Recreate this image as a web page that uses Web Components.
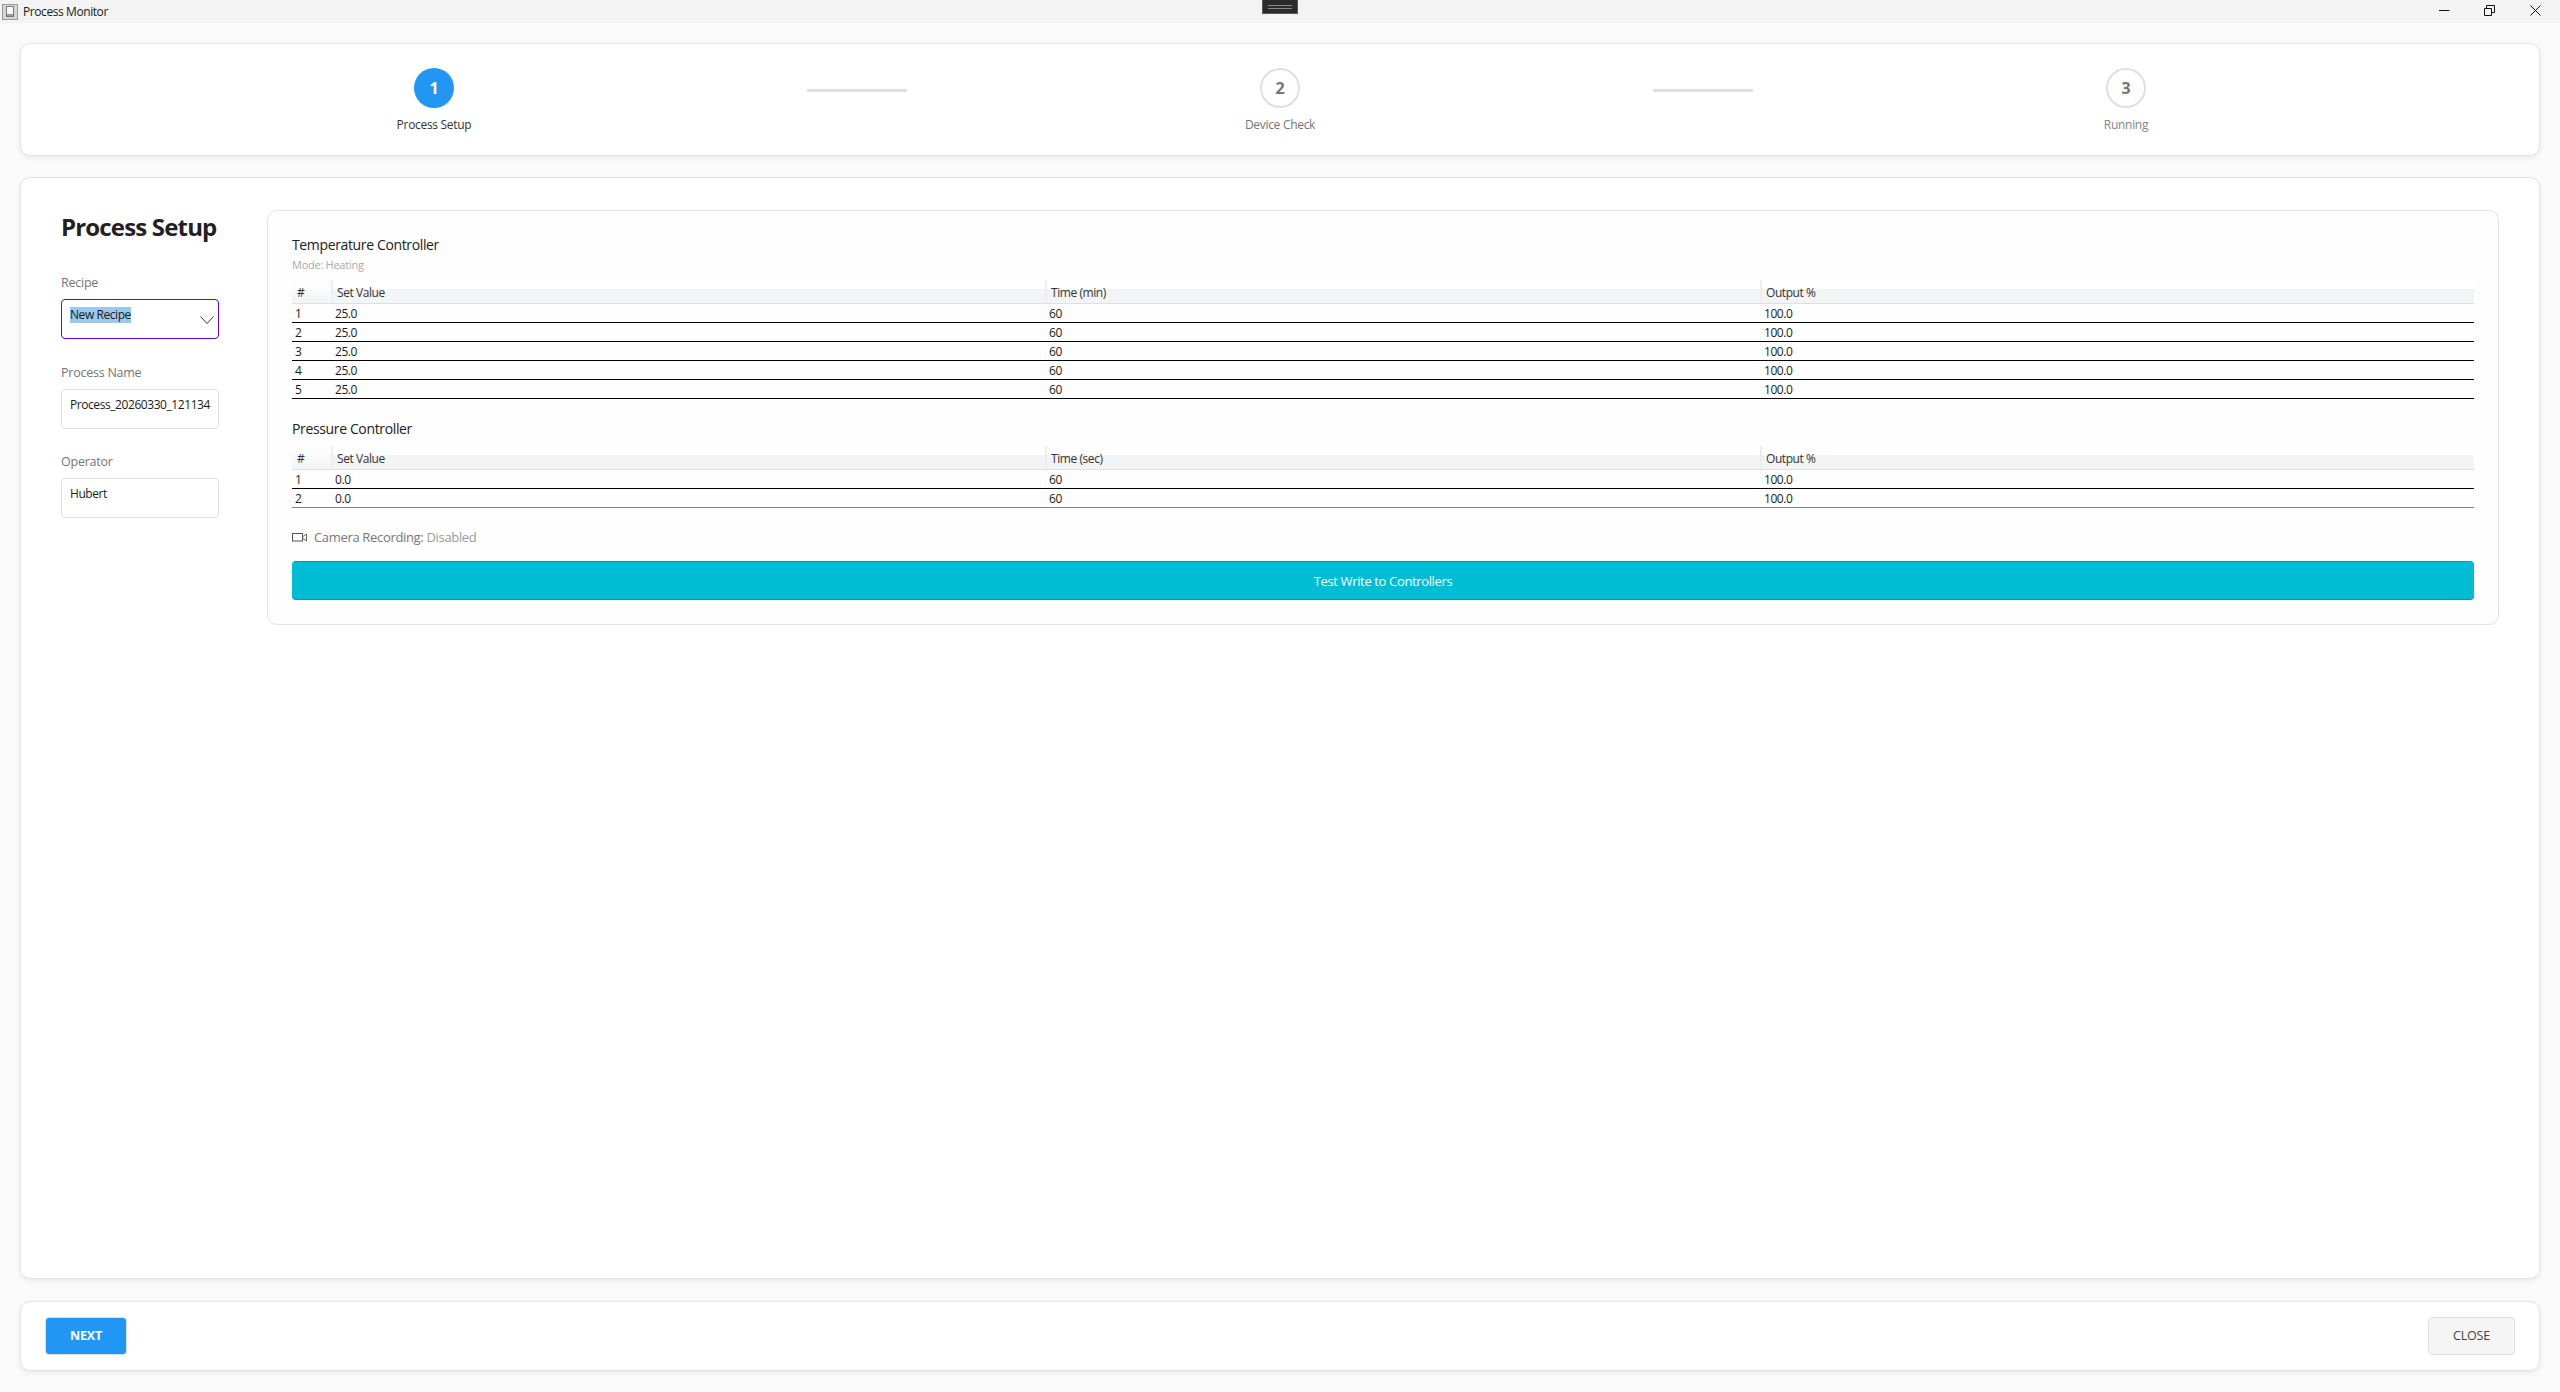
<!DOCTYPE html>
<html>
<head>
<meta charset="utf-8">
<title>Process Monitor</title>
<style>
  html, body { margin: 0; height: 100%; overflow: hidden; }
  body { background: #fafafa; font-family: "Open Sans", "Noto Sans", sans-serif; color: #212121; }
</style>
</head>
<body>
<process-app>
  <window-bar title-text="Process Monitor" slot="bar"></window-bar>
  <card-box slot="steps">
    <step-bar>
      <wizard-step num="1" label="Process Setup" active></wizard-step>
      <step-line></step-line>
      <wizard-step num="2" label="Device Check"></wizard-step>
      <step-line></step-line>
      <wizard-step num="3" label="Running" dim></wizard-step>
    </step-bar>
  </card-box>
  <card-box slot="main" class="grow">
    <setup-page>
      <form-field label="Recipe" value="New Recipe" focused></form-field>
      <form-field label="Process Name" value="Process_20260330_121134"></form-field>
      <form-field label="Operator" value="Hubert"></form-field>
      <controller-panel slot="panel">
        <section-title>Temperature Controller</section-title>
        <mode-note>Mode: Heating</mode-note>
        <data-table time="Time (min)" rows="1,25.0,60,100.0;2,25.0,60,100.0;3,25.0,60,100.0;4,25.0,60,100.0;5,25.0,60,100.0"></data-table>
        <section-title class="next">Pressure Controller</section-title>
        <data-table class="tight" last-gray time="Time (sec)" rows="1,0.0,60,100.0;2,0.0,60,100.0"></data-table>
        <camera-note></camera-note>
        <action-btn kind="teal">Test Write to Controllers</action-btn>
      </controller-panel>
    </setup-page>
  </card-box>
  <card-box slot="foot">
    <foot-bar>
      <action-btn kind="primary">NEXT</action-btn>
      <action-btn kind="plain" slot="end">CLOSE</action-btn>
    </foot-bar>
  </card-box>
</process-app>

<script>
const FONT = `"Open Sans", "Noto Sans", sans-serif`;

// small helper, every element here is just a style + markup in an open shadow root
function shadow(el, html) {
  el.attachShadow({ mode: "open" }).innerHTML = html;
}

class ProcessApp extends HTMLElement {
  constructor() {
    super();
    shadow(this, `<style>
      :host { display: flex; flex-direction: column; height: 1392px; box-sizing: border-box; }
      .body { flex: 1; display: flex; flex-direction: column; padding: 20px 20px 21px; min-height: 0; }
      .s1 { display: block; height: 113px; margin-bottom: 21px; }
      .s2 { display: flex; flex: 1; min-height: 0; margin-bottom: 22px; }
      .s3 { display: block; height: 70px; }
      ::slotted([slot=steps]) { height: 113px; }
      ::slotted([slot=main]) { flex: 1; }
      ::slotted([slot=foot]) { height: 70px; }
    </style>
    <slot name="bar"></slot>
    <div class="body">
      <div class="s1"><slot name="steps"></slot></div>
      <div class="s2"><slot name="main"></slot></div>
      <div class="s3"><slot name="foot"></slot></div>
    </div>`);
  }
}

class WindowBar extends HTMLElement {
  connectedCallback() {
    if (this.shadowRoot) return;
    shadow(this, `<style>
      :host { display: flex; align-items: center; height: 23px; background: #f3f3f3; position: relative; flex: none; font: 12px/23px ${FONT}; color: #1a1a1a; }
      .icon { margin: 0 5px 0 2px; flex: none; }
      .ttl { letter-spacing: -0.42px; }
      .notch { position: absolute; left: 1262px; top: 0; width: 34px; height: 12px; background: #2b2b2b; border: 1px solid #585858; border-top: 0; display: flex; flex-direction: column; align-items: center; justify-content: center; gap: 2px; padding-top: 1px; box-sizing: content-box; }
      .notch i { display: block; width: 24px; height: 1px; background: #8a8a8a; }
      .ctrl { margin-left: auto; display: flex; height: 23px; }
      .ctrl svg { display: block; position: absolute; top: 5px; }
    </style>
    <svg class="icon" width="16" height="16" viewBox="0 0 16 16">
      <rect x=".5" y=".5" width="15" height="15" fill="#d6d6d6" stroke="#9a9a9a"/>
      <rect x="4.5" y="2.5" width="7" height="10" fill="#fafafa" stroke="#777"/>
      <rect x="5" y="10" width="6" height="2" fill="#9a9a9a"/>
    </svg>
    <span class="ttl">${this.getAttribute("title-text")}</span>
    <div class="notch"><i></i><i></i></div>
    <div class="ctrl">
      <svg style="left:2439px" width="11" height="11" viewBox="0 0 11 11"><path d="M0 5.5H10.5" stroke="#111" fill="none"/></svg>
      <svg style="left:2484px" width="11" height="11" viewBox="0 0 11 11"><path d="M.5 3.5h7v7h-7zM2.5 3.5V.5h8v7H7.5" stroke="#111" fill="none"/></svg>
      <svg style="left:2530px" width="11" height="11" viewBox="0 0 11 11"><path d="M.5 .5L10.5 10.5M10.5 .5L.5 10.5" stroke="#111" fill="none"/></svg>
    </div>`);
  }
}

class CardBox extends HTMLElement {
  constructor() {
    super();
    shadow(this, `<style>
      :host { display: block; box-sizing: border-box; background: #fff; border: 1px solid #e4e4e4; border-radius: 10px; box-shadow: 0 2px 5px rgba(0,0,0,.07); }
    </style><slot></slot>`);
  }
}

class StepBar extends HTMLElement {
  constructor() {
    super();
    shadow(this, `<style>
      :host { display: flex; align-items: flex-start; padding: 0 40px; height: 100%; }
    </style><slot></slot>`);
  }
}

class WizardStep extends HTMLElement {
  connectedCallback() {
    if (this.shadowRoot) return;
    const active = this.hasAttribute("active");
    const dim = this.hasAttribute("dim");
    shadow(this, `<style>
      :host { display: flex; flex: 1; flex-direction: column; align-items: center; padding-top: 24px; }
      .dot { width: 40px; height: 40px; box-sizing: border-box; border-radius: 50%; display: flex; align-items: center; justify-content: center; font: 700 16px/1 ${FONT};
        background: ${active ? "#2196f3" : "#fff"}; color: ${active ? "#fff" : "#757575"}; border: ${active ? "0" : "2.5px solid #e0e0e0"}; }
      .lbl { margin-top: 8px; font: 500 12px/18px ${FONT}; letter-spacing: -0.3px; color: ${active ? "#333" : dim ? "#858585" : "#757575"}; }
    </style>
    <div class="dot">${this.getAttribute("num")}</div>
    <div class="lbl">${this.getAttribute("label")}</div>`);
  }
}

class StepLine extends HTMLElement {
  constructor() {
    super();
    shadow(this, `<style>
      :host { display: block; flex: none; width: 100px; height: 3px; margin-top: 45px; background: #e0e0e0; }
    </style>`);
  }
}

class SetupPage extends HTMLElement {
  constructor() {
    super();
    shadow(this, `<style>
      :host { display: flex; align-items: flex-start; padding: 32px 40px 0; gap: 48px; }
      .left { width: 158px; flex: none; }
      h1 { margin: -1px 0 29px; font: 700 24px/36px ${FONT}; letter-spacing: -0.83px; color: #212121; white-space: nowrap; }
      .right { flex: 1; min-width: 0; }
    </style>
    <div class="left"><h1>Process Setup</h1><slot></slot></div>
    <div class="right"><slot name="panel"></slot></div>`);
  }
}

class FormField extends HTMLElement {
  connectedCallback() {
    if (this.shadowRoot) return;
    const focused = this.hasAttribute("focused");
    const val = this.getAttribute("value");
    shadow(this, `<style>
      :host { display: block; margin-bottom: 24px; }
      :host([focused]) { margin-bottom: 25px; }
      label { display: block; font: 500 12.5px/18px ${FONT}; letter-spacing: -0.24px; color: #757575; margin-bottom: 7px; }
      .box { position: relative; box-sizing: border-box; height: 40px; border: 1px solid ${focused ? "#6200ee" : "#e0e0e0"}; border-radius: 4px; padding: 7px 8px 0; background: #fff; font: 12px/16px ${FONT}; letter-spacing: -0.43px; color: #1a1a1a; white-space: nowrap; }
      .sel { background: #99c9ef; display: inline-block; }
      svg { position: absolute; right: 4px; top: 16px; }
    </style>
    <label>${this.getAttribute("label")}</label>
    <div class="box">${focused
      ? `<span class="sel">${val}</span><svg width="14" height="9" viewBox="0 0 14 9"><path d="M.5 .5L7 7.5L13.5 .5" fill="none" stroke="#333"/></svg>`
      : val}</div>`);
  }
}

class ControllerPanel extends HTMLElement {
  constructor() {
    super();
    shadow(this, `<style>
      :host { display: block; box-sizing: border-box; background: #fefefe; border: 1px solid #e2e2e2; border-radius: 10px; padding: 24px; height: 415px; }
    </style><slot></slot>`);
  }
}

class SectionTitle extends HTMLElement {
  constructor() {
    super();
    shadow(this, `<style>
      :host { display: block; font: 500 14px/20px ${FONT}; letter-spacing: -0.36px; color: #212121; }
      :host(.next) { margin-top: 20px; margin-bottom: 7px; }
    </style><slot></slot>`);
  }
}

class ModeNote extends HTMLElement {
  constructor() {
    super();
    shadow(this, `<style>
      :host { display: block; margin: 2px 0 7px; font: 11px/16px ${FONT}; letter-spacing: -0.26px; color: #aaa; }
    </style><slot></slot>`);
  }
}

class DataTable extends HTMLElement {
  connectedCallback() {
    if (this.shadowRoot) return;
    const heads = ["#", "Set Value", this.getAttribute("time"), "Output %"];
    const rows = this.getAttribute("rows").split(";").map(r => r.split(","));
    const gray = this.hasAttribute("last-gray");
    shadow(this, `<style>
      :host { display: block; font: 12px/18px ${FONT}; letter-spacing: -0.43px; color: #1a1a1a; }
      .r { display: grid; grid-template-columns: 39px 714px 715px 1fr; }
      .h { height: 23px; border-bottom: 1px solid #e0e0e0; background: linear-gradient(#fff 0 9px, #f3f4f6 9px); }
      .h div { padding: 4px 0 0 4px; border-left: 2px solid #eee; line-height: 17px; color: #333; }
      .h div:first-child { border-left: 0; padding-left: 5px; background: linear-gradient(#fff, #f3f4f6); }
      .b { height: 18px; border-bottom: 1px solid #000; }
      .b.g { border-bottom-color: #808080; }
      .b div { padding: 1px 0 0 4px; line-height: 17px; }
      .b div:first-child { padding-left: 3px; }
    </style>
    <div class="r h">${heads.map(h => `<div>${h}</div>`).join("")}</div>
    ${rows.map((r, i) => `<div class="r b${gray && i === rows.length - 1 ? " g" : ""}">${r.map(c => `<div>${c}</div>`).join("")}</div>`).join("")}`);
  }
}

class CameraNote extends HTMLElement {
  constructor() {
    super();
    shadow(this, `<style>
      :host { display: flex; align-items: center; gap: 7px; margin: 20px 0 15px; font: 13px/18px ${FONT}; letter-spacing: -0.33px; color: #777; }
      b { font-weight: 500; color: #9a9a9a; }
    </style>
    <svg width="15" height="9" viewBox="0 0 15 9"><rect x=".5" y=".5" width="10" height="7.5" fill="none" stroke="#555"/><path d="M11 3.5L14.5 1V8L11 5.5" fill="none" stroke="#666"/></svg>
    <span>Camera Recording: <b>Disabled</b></span>`);
  }
}

class ActionBtn extends HTMLElement {
  connectedCallback() {
    if (this.shadowRoot) return;
    const k = this.getAttribute("kind");
    const skin = {
      teal: "width:100%;height:39px;background:#00bcd4;border:1px solid #0097a7;border-width:1px 0;color:#fff;font:500 13px/38px " + FONT + ";letter-spacing:-.36px;",
      primary: "width:82px;height:38px;background:#2196f3;border:1px solid #d8e2ea;color:#fff;font:700 12.5px/36px " + FONT + ";letter-spacing:-.2px;",
      plain: "width:87px;height:38px;background:#f5f5f5;border:1px solid #e0e0e0;color:#424242;font:500 12.5px/36px " + FONT + ";letter-spacing:-.2px;"
    }[k];
    shadow(this, `<style>
      :host { display: block; }
      .b { box-sizing: border-box; border-radius: 4px; text-align: center; ${skin} }
    </style><div class="b"><slot></slot></div>`);
  }
}

class FootBar extends HTMLElement {
  constructor() {
    super();
    shadow(this, `<style>
      :host { display: flex; justify-content: space-between; padding: 15px 24px 0 24px; }
    </style><slot></slot><slot name="end"></slot>`);
  }
}

customElements.define("process-app", ProcessApp);
customElements.define("window-bar", WindowBar);
customElements.define("card-box", CardBox);
customElements.define("step-bar", StepBar);
customElements.define("wizard-step", WizardStep);
customElements.define("step-line", StepLine);
customElements.define("setup-page", SetupPage);
customElements.define("form-field", FormField);
customElements.define("controller-panel", ControllerPanel);
customElements.define("section-title", SectionTitle);
customElements.define("mode-note", ModeNote);
customElements.define("data-table", DataTable);
customElements.define("camera-note", CameraNote);
customElements.define("action-btn", ActionBtn);
customElements.define("foot-bar", FootBar);
</script>
</body>
</html>
